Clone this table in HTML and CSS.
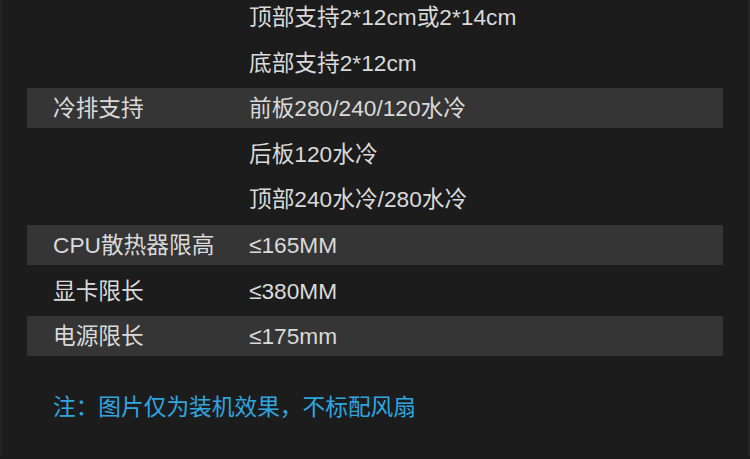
FILE: index.html
```html
<!DOCTYPE html>
<html lang="zh-CN">
<head>
    <meta charset="UTF-8">
    <meta name="viewport" content="width=device-width, initial-scale=1">
    <title>机箱参数</title>
    <link rel="stylesheet" href="styles.css">
</head>
<body>
<div class="page">
    <div class="specs">
        <div class="row">
            <span class="label"></span>
            <span class="value">顶部支持2*12cm或2*14cm</span>
        </div>
        <div class="row">
            <span class="label"></span>
            <span class="value">底部支持2*12cm</span>
        </div>
        <div class="row band">
            <span class="label">冷排支持</span>
            <span class="value">前板280/240/120水冷</span>
        </div>
        <div class="row">
            <span class="label"></span>
            <span class="value">后板120水冷</span>
        </div>
        <div class="row">
            <span class="label"></span>
            <span class="value">顶部240水冷/280水冷</span>
        </div>
        <div class="row band">
            <span class="label">CPU散热器限高</span>
            <span class="value">≤165MM</span>
        </div>
        <div class="row">
            <span class="label">显卡限长</span>
            <span class="value">≤380MM</span>
        </div>
        <div class="row band">
            <span class="label">电源限长</span>
            <span class="value">≤175mm</span>
        </div>
    </div>
    <p class="note">注：图片仅为装机效果，不标配风扇</p>
</div>
</body>
</html>
```

FILE: styles.css
```css
html, body {
    margin: 0;
    height: 100%;
}

body {
    background: #1c1c1c;
    font-family: "Liberation Sans", "Noto Sans CJK SC", sans-serif;
    color: #dadada;
    overflow: hidden;
}

.page {
    height: 100%;
    border-left: 2px solid #242424;
    border-right: 2px solid #242424;
    box-sizing: border-box;
}

.specs {
    display: flex;
    flex-direction: column;
    gap: 5.6px;
    margin: -3px 0 0 25px;
    width: 696px;
}

.row {
    display: grid;
    grid-template-columns: 196px 1fr;
    align-items: center;
    height: 40px;
    font-size: 22.7px;
    line-height: 40px;
    padding-left: 26px;
}

.band {
    background: #353535;
}

.value {
    white-space: nowrap;
}

.note {
    margin: 36px 0 0 51px;
    font-size: 22.7px;
    line-height: 30px;
    color: #2fa6e0;
}
```
